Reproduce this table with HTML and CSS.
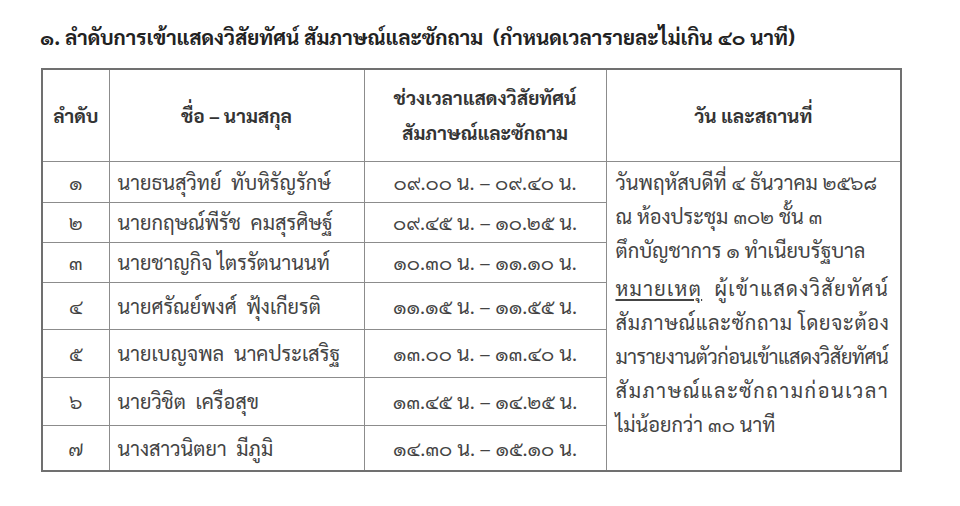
FILE: index.html
```html
<!DOCTYPE html>
<html lang="th">
<head>
<meta charset="utf-8">
<title>ลำดับการเข้าแสดงวิสัยทัศน์</title>
<link rel="stylesheet" href="styles.css">
</head>
<body>
<div class="page">
  <h1 class="title">๑. ลำดับการเข้าแสดงวิสัยทัศน์ สัมภาษณ์และซักถาม&nbsp; (กำหนดเวลารายละไม่เกิน ๔๐ นาที)</h1>
  <table class="sched">
    <colgroup>
      <col class="c-no"><col class="c-name"><col class="c-time"><col class="c-place">
    </colgroup>
    <thead>
      <tr class="r-head">
        <th>ลำดับ</th>
        <th>ชื่อ – นามสกุล</th>
        <th>ช่วงเวลาแสดงวิสัยทัศน์<br>สัมภาษณ์และซักถาม</th>
        <th>วัน และสถานที่</th>
      </tr>
    </thead>
    <tbody>
      <tr class="r1">
        <td class="no">๑</td>
        <td class="name">นายธนสุวิทย์&nbsp; ทับหิรัญรักษ์</td>
        <td class="time">๐๙.๐๐ น. – ๐๙.๔๐ น.</td>
        <td class="place" rowspan="7">
          <div class="ln">วันพฤหัสบดีที่ ๔ ธันวาคม ๒๕๖๘</div>
          <div class="ln">ณ ห้องประชุม ๓๐๒ ชั้น ๓</div>
          <div class="ln">ตึกบัญชาการ ๑ ทำเนียบรัฐบาล</div>
          <div class="ln gap sp4"><u>หมายเหตุ</u>&nbsp; ผู้เข้าแสดงวิสัยทัศน์</div>
          <div class="ln sp5">สัมภาษณ์และซักถาม โดยจะต้อง</div>
          <div class="ln sp6">มารายงานตัวก่อนเข้าแสดงวิสัยทัศน์</div>
          <div class="ln sp7">สัมภาษณ์และซักถามก่อนเวลา</div>
          <div class="ln">ไม่น้อยกว่า ๓๐ นาที</div>
        </td>
      </tr>
      <tr class="r2">
        <td class="no">๒</td>
        <td class="name">นายกฤษณ์พีรัช&nbsp; คมสุรศิษฐ์</td>
        <td class="time">๐๙.๔๕ น. – ๑๐.๒๕ น.</td>
      </tr>
      <tr class="r3">
        <td class="no">๓</td>
        <td class="name">นายชาญกิจ ไตรรัตนานนท์</td>
        <td class="time">๑๐.๓๐ น. – ๑๑.๑๐ น.</td>
      </tr>
      <tr class="r4">
        <td class="no">๔</td>
        <td class="name">นายศรัณย์พงศ์&nbsp; ฟุ้งเกียรติ</td>
        <td class="time">๑๑.๑๕ น. – ๑๑.๕๕ น.</td>
      </tr>
      <tr class="r5">
        <td class="no">๕</td>
        <td class="name">นายเบญจพล&nbsp; นาคประเสริฐ</td>
        <td class="time">๑๓.๐๐ น. – ๑๓.๔๐ น.</td>
      </tr>
      <tr class="r6">
        <td class="no">๖</td>
        <td class="name">นายวิชิต&nbsp; เครือสุข</td>
        <td class="time">๑๓.๔๕ น. – ๑๔.๒๕ น.</td>
      </tr>
      <tr class="r7">
        <td class="no">๗</td>
        <td class="name">นางสาวนิตยา&nbsp; มีภูมิ</td>
        <td class="time">๑๔.๓๐ น. – ๑๕.๑๐ น.</td>
      </tr>
    </tbody>
  </table>
</div>
</body>
</html>
```

FILE: styles.css
```css
html, body {
  margin: 0;
  padding: 0;
  background: #ffffff;
}
body {
  font-family: "Sarabun", "TH Sarabun New", "Noto Sans Thai Looped", "Noto Sans Thai", "Loma", "Garuda", "Norasi", "Kinnari", "Tlwg Typo", "DejaVu Sans", sans-serif;
  color: #444444;
}
.page {
  padding: 19px 0 0 40px;
}
.title {
  margin: 0;
  font-size: 20.5px;
  line-height: 36px;
  font-weight: bold;
  color: #222222;
  white-space: nowrap;
}
.sched {
  margin-top: 13px;
  margin-left: 1px;
  width: 859px;
  table-layout: fixed;
  border-collapse: collapse;
  border: 2px solid #707070;
  font-size: 20px;
}
.c-no { width: 67px; }
.c-name { width: 255px; }
.c-time { width: 242px; }
.c-place { width: 295px; }
.sched th, .sched td {
  border: 1px solid #8c8c8c;
  padding: 0;
}
.sched th {
  font-size: 19px;
  font-weight: bold;
  color: #333333;
  line-height: 35px;
  text-align: center;
  vertical-align: middle;
}
.r-head { height: 92px; }
.r1 { height: 41px; }
.r2 { height: 40px; }
.r3 { height: 40px; }
.r4 { height: 47px; }
.r5 { height: 48px; }
.r6 { height: 48px; }
.r7 { height: 46px; }
.no {
  text-align: center;
  vertical-align: middle;
}
.name {
  padding-left: 8px !important;
  vertical-align: middle;
  white-space: nowrap;
}
.time {
  text-align: center;
  vertical-align: middle;
  white-space: nowrap;
}
.place {
  vertical-align: top;
  padding: 3px 6px 0 9px !important;
}
.ln {
  line-height: 34px;
  white-space: nowrap;
}
.ln.gap {
  margin-top: 4px;
}
.sp4 { letter-spacing: 1.35px; }
.sp5 { letter-spacing: 0.7px; }
.sp6 { letter-spacing: -0.5px; }
.sp7 { letter-spacing: 1.55px; }
.place u {
  text-underline-offset: 3px;
}
```
